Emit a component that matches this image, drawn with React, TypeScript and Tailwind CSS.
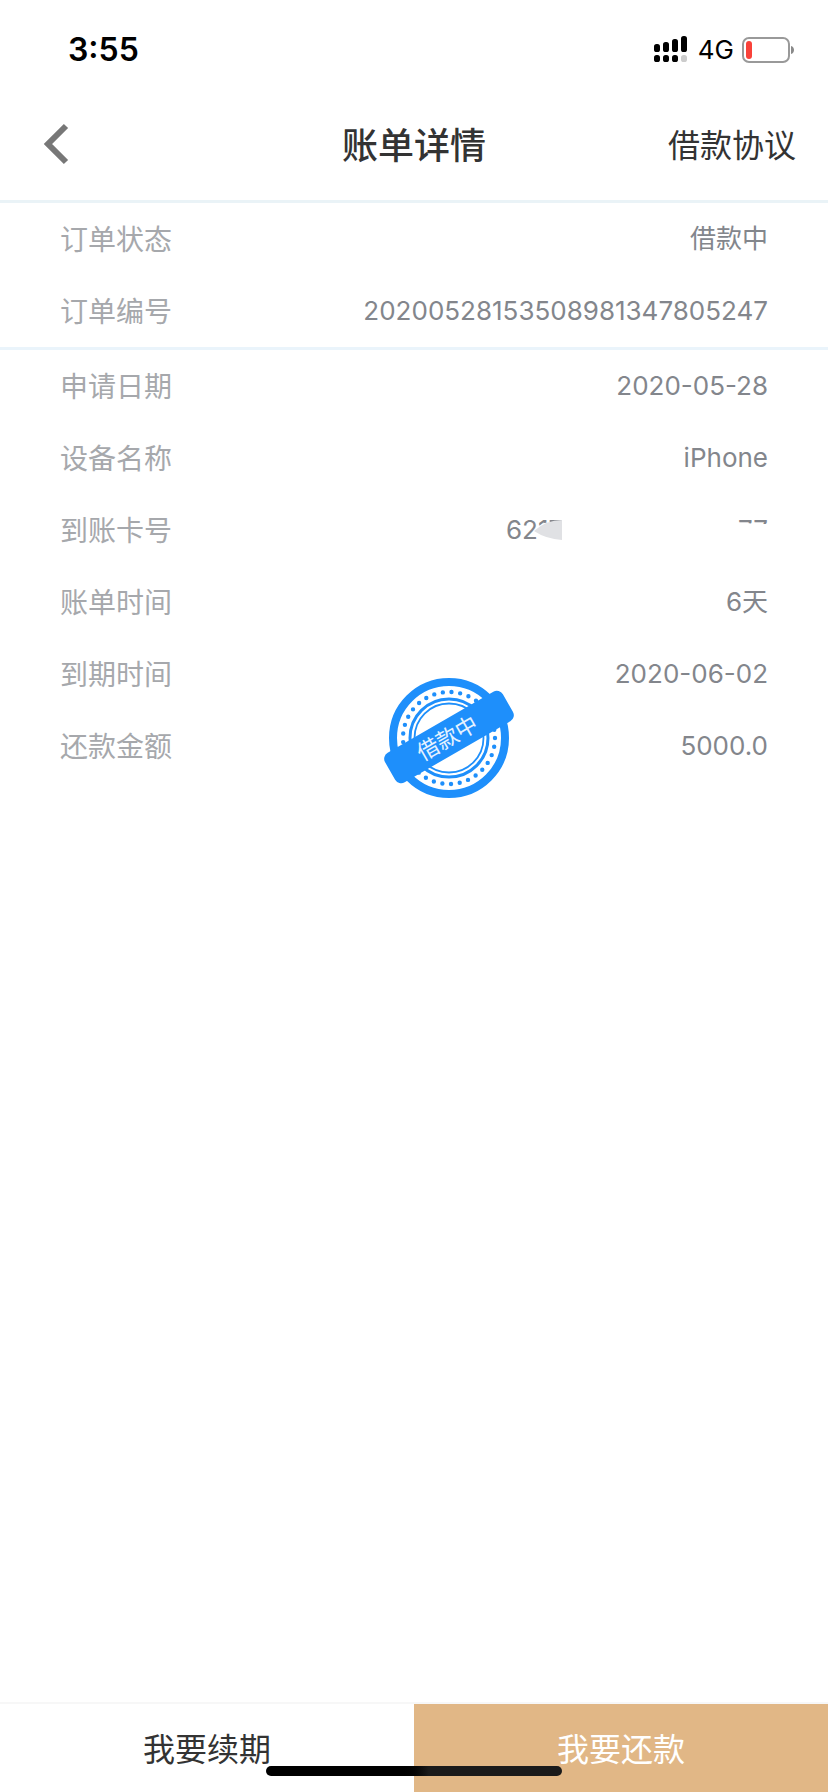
import { type ReactNode } from "react";

const cjk = "font-['Inter','Noto_Sans_CJK_SC',sans-serif]";

function StatusBar() {
  return (
    <div className="flex h-22 items-center justify-between pt-3 pr-8 pl-17 text-black">
      <time className="text-[32px] leading-10 font-semibold">3:55</time>
      <div className="flex items-center gap-2">
        <svg width="36" height="28" viewBox="0 0 36 28" aria-hidden="true">
          <rect x="0" y="8" width="6" height="8" rx="2.6" />
          <rect x="9" y="6" width="6" height="10" rx="2.6" />
          <rect x="18" y="3" width="6" height="13" rx="2.6" />
          <rect x="27" y="0" width="6" height="16" rx="2.6" />
          <rect x="0" y="19" width="6" height="7" rx="2.6" />
          <rect x="9" y="19" width="6" height="7" rx="2.6" />
          <rect x="18" y="19" width="6" height="7" rx="2.6" />
          <rect x="27" y="19" width="6" height="7" rx="2.6" fill="#cccccc" />
        </svg>
        <span className="text-[26px] leading-8">4G</span>
        <svg width="54" height="26" viewBox="0 0 54 26" aria-hidden="true">
          <rect x="1" y="1" width="46" height="24" rx="6" fill="none" stroke="#999999" strokeWidth="2" />
          <rect x="4" y="4" width="6" height="18" rx="3" fill="#f9423a" />
          <path d="M49 9C53 10 53 16 49 17Z" fill="#8a8a8a" />
        </svg>
      </div>
    </div>
  );
}

function Header() {
  return (
    <header className="grid h-[115px] grid-cols-3 items-center border-b-3 border-[#eaf3f7] px-8 text-[#333333]">
      <button type="button" aria-label="返回" className="justify-self-start pl-2">
        <svg width="30" height="42" viewBox="0 0 30 42" fill="none" aria-hidden="true">
          <path d="M26 3L8 21L26 39" stroke="#777777" strokeWidth="6" />
        </svg>
      </button>
      <h1 className="justify-self-center pt-1 text-[36px] leading-12 font-medium whitespace-nowrap">账单详情</h1>
      <a href="#agreement" className="justify-self-end pt-1 text-[32px] leading-12 whitespace-nowrap">
        借款协议
      </a>
    </header>
  );
}

function Row({ label, children }: { label: string; children: ReactNode }) {
  return (
    <div className="flex h-18 items-center justify-between px-15">
      <dt className="pt-0.5 text-[28px] leading-10 text-[#a6a8ac]">{label}</dt>
      <dd className="text-[26px] leading-10 text-[#83868c]">{children}</dd>
    </div>
  );
}

function MaskedCard() {
  return (
    <span className="relative flex w-[262px] justify-between">
      <span>6217</span>
      <span>77</span>
      <svg className="absolute inset-0" width="262" height="40" viewBox="0 0 262 40" aria-hidden="true">
        <path d="M29 21L38 13L56 11V0H224V13H242L247 14H262V40H34Z" fill="#ffffff" />
        <path d="M28 21Q40 10 56 10V30Q40 29 28 21Z" fill="#e0e1e4" />
      </svg>
    </span>
  );
}

function Stamp() {
  return (
    <svg width="136" height="122" viewBox="0 0 136 122" role="img" aria-label="借款中">
      <circle cx="68" cy="61" r="56" fill="#ffffff" stroke="#1e8ffb" strokeWidth="8" />
      <circle cx="68" cy="61" r="46" fill="none" stroke="#1e8ffb" strokeWidth="4.4" strokeLinecap="round" strokeDasharray="0 8.758" />
      <circle cx="68" cy="61" r="39" fill="none" stroke="#1e8ffb" strokeWidth="3" />
      <circle cx="68" cy="61" r="34.5" fill="none" stroke="#1e8ffb" strokeWidth="1.8" />
      <g transform="rotate(-30 68 60)">
        <rect x="0" y="43" width="136" height="34" rx="7" fill="#1e8ffb" />
        <text x="66" y="68" textAnchor="middle" fontSize="22" fill="#e6f2ff">
          借款中
        </text>
      </g>
    </svg>
  );
}

export default function App() {
  return (
    <div className={`relative flex min-h-screen flex-col bg-white ${cjk}`} lang="zh-CN">
      <StatusBar />
      <Header />
      <main className="grow">
        <dl className="border-b-3 border-[#eaf4fb]">
          <Row label="订单状态">借款中</Row>
          <Row label="订单编号">20200528153508981347805247</Row>
        </dl>
        <div className="relative">
          <dl>
            <Row label="申请日期">2020-05-28</Row>
            <Row label="设备名称">iPhone</Row>
            <Row label="到账卡号">
              <MaskedCard />
            </Row>
            <Row label="账单时间">6天</Row>
            <Row label="到期时间">2020-06-02</Row>
            <Row label="还款金额">5000.0</Row>
          </dl>
          <div className="absolute top-[327px] left-[46%]">
            <Stamp />
          </div>
        </div>
      </main>
      <footer className="relative grid h-[90px] grid-cols-2 border-t-2 border-[#f7f7f7] text-[32px] leading-10">
        <button type="button" className="pt-1 text-[#333333]">
          我要续期
        </button>
        <button type="button" className="bg-[#e1b786] pt-1 text-white">
          我要还款
        </button>
        <div className="absolute bottom-4 left-1/2 h-2.5 w-74 -translate-x-1/2 rounded-full bg-linear-to-r from-black from-45% to-[#1a1a1a] to-55%" />
      </footer>
    </div>
  );
}
